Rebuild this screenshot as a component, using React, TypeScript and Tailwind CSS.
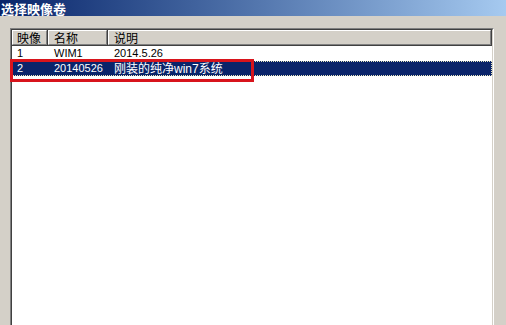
import React from "react";

const rows = [
  { id: "1", name: "WIM1", desc: "2014.5.26" },
  { id: "2", name: "20140526", desc: "刚装的纯净win7系统" },
];

const HeaderCell = ({ label, className }: { label: string; className: string }) => (
  <div className={`h-[16px] border-r border-b border-r-[#404040] border-b-[#404040] bg-[#d4d0c8] ${className}`}>
    <div className="h-full border-t border-l border-r border-b border-t-white border-l-white border-r-[#808080] border-b-[#808080] flex items-center">
      <span className="text-[12px] leading-none text-black">{label}</span>
    </div>
  </div>
);

export default function App() {
  const selected = 1;
  return (
    <div
      className="w-[506px] h-[325px] bg-[#d4d0c8] overflow-hidden flex flex-col relative"
      style={{ fontFamily: '"Liberation Sans", "Noto Sans CJK SC", sans-serif' }}
    >
      {/* title bar */}
      <div className="h-[16px] shrink-0 bg-gradient-to-r from-[#0a246a] to-[#a6caf0] flex items-center pl-[1px]">
        <span className="text-[13px] leading-none font-bold text-white" style={{ fontFamily: '"Noto Sans CJK SC", sans-serif' }}>
          选择映像卷
        </span>
      </div>

      <div className="flex-1 pl-[10px] pr-[12px] pt-[12px]">
        {/* sunken list box */}
        <div className="h-[340px] border-t border-l border-r border-b border-t-[#808080] border-l-[#808080] border-r-white border-b-white">
          <div className="h-full border-t border-l border-r border-b border-t-[#404040] border-l-[#404040] border-r-[#d4d0c8] border-b-[#d4d0c8] bg-white">
            <div className="flex" style={{ fontFamily: '"Noto Sans CJK SC", sans-serif' }}>
              <HeaderCell label="映像" className="w-[36px] [&>div]:pl-[4px]" />
              <HeaderCell label="名称" className="w-[60px] [&>div]:pl-[5px]" />
              <HeaderCell label="说明" className="flex-1 [&>div]:pl-[5px]" />
            </div>
            {rows.map((r, i) => {
              const sel = i === selected;
              return (
                <div
                  key={r.id}
                  className={`flex h-[15px] items-center text-[11px] leading-none ${
                    sel ? "bg-[#0a246a] text-white outline-1 outline-dotted outline-[#e8e8c0] -outline-offset-1" : "text-black"
                  }`}
                >
                  <div className="w-[36px] pl-[5px]">{r.id}</div>
                  <div className="w-[60px] pl-[6px]">{r.name}</div>
                  <div className={`flex-1 pl-[6px] ${sel ? "text-[12px]" : ""}`}>{r.desc}</div>
                </div>
              );
            })}
          </div>
        </div>
      </div>

      {/* red annotation box */}
      <div className="absolute left-[10px] top-[59px] w-[244px] h-[23px] border-[3px] border-[#d8141c]" />
    </div>
  );
}
